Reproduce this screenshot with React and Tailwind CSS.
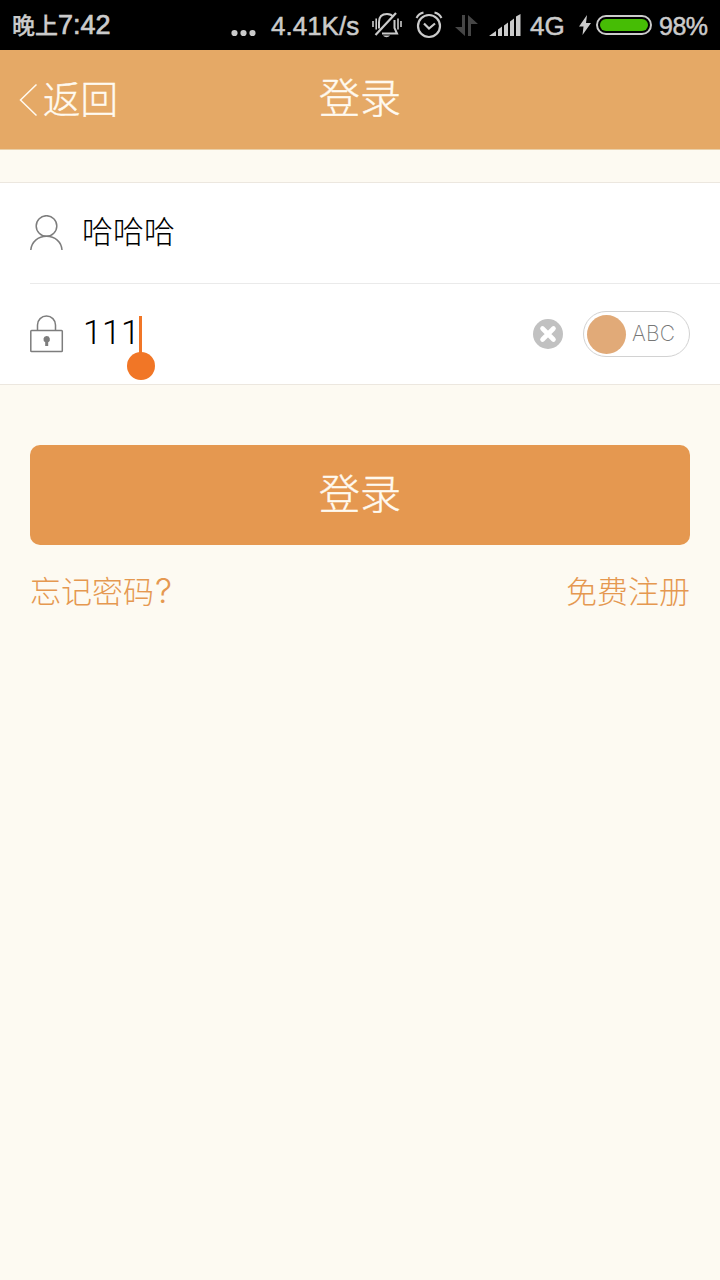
import React, { useState } from 'react';

const CJK = "font-['Noto_Sans_CJK_SC',sans-serif]";
const LATIN = "font-['Liberation_Sans','Noto_Sans_CJK_SC',sans-serif]";

function StatusBar() {
  return (
    <div className={`flex h-[50px] items-center bg-black text-[#cbcbcb] ${LATIN}`}>
      <div className="ml-3 flex w-[219px] items-center whitespace-nowrap">
        <span className="pt-px text-[23px] leading-[50px] font-medium [-webkit-text-stroke:0.3px]">晚上</span>
        <span className="text-[27px] leading-[50px] [-webkit-text-stroke:0.7px]">7:42</span>
      </div>
      <svg className="mt-4 h-2 w-[26px] shrink-0" viewBox="0 0 26 8" fill="currentColor">
        <circle cx="3.5" cy="4" r="3.1" />
        <circle cx="12.5" cy="4" r="3.1" />
        <circle cx="21.5" cy="4" r="3.1" />
      </svg>
      <span className="ml-[14px] w-[89px] shrink-0 pt-[2px] text-[26px] leading-[48px] whitespace-nowrap [-webkit-text-stroke:0.5px]">4.41K/s</span>

      {/* Muted bell */}
      <svg className="ml-3 h-[28px] w-[30px] shrink-0" viewBox="0 0 30 28" fill="none" stroke="currentColor" strokeWidth="2">
        <path d="M7 17.500V11c0-5 3-8 8-8 3 0 5 1 6.500 3M22.500 9v8l2.500 5.500H10" />
        <path d="M3.500 24L24 2" strokeWidth="2.200" />
        <path d="M11 24.500c2 2.200 5 2.200 7 0z" fill="currentColor" stroke="none" />
        <path d="M1 10v6M4.200 7.500v11M26 7.500v11M29 10v6" strokeWidth="1.600" />
      </svg>

      {/* Alarm */}
      <svg className="ml-[13px] h-[28px] w-[28px] shrink-0" viewBox="0 0 28 28" fill="none" stroke="currentColor" strokeWidth="2.200">
        <circle cx="14" cy="15" r="11" />
        <path d="M9 12.500l5 5 6-5" />
        <path d="M1.500 7C3 4 5.500 2.200 8.500 1.500M26.500 7C25 4 22.500 2.200 19.500 1.500" strokeWidth="2" />
      </svg>

      {/* Data arrows */}
      <svg className="mt-[2px] ml-3 h-[22px] w-[24px] shrink-0 text-[#464646]" viewBox="0 0 24 22" fill="currentColor">
        <path d="M7 0h3v21L0 12h7z" />
        <path d="M13 0l10 9h-7v12h-3z" />
      </svg>

      {/* Signal */}
      <svg className="ml-[10px] h-[22px] w-[32px] shrink-0" viewBox="0 0 32 22" fill="currentColor">
        <path d="M0 22l7-5v5zM9 15.500l4-3V22H9zM15 11.500l4-3V22h-4zM21 7.500l4-3V22h-4zM27 2.500l4.500-2.500V22H27z" />
      </svg>
      <span className="ml-[9px] w-[38px] shrink-0 pt-[2px] text-[26px] leading-[48px] [-webkit-text-stroke:0.5px]">4G</span>

      {/* Charging battery */}
      <svg className="ml-[11px] h-5 w-3 shrink-0" viewBox="0 0 12 20" fill="currentColor">
        <path d="M8 0L0 11.500h4.500L3.500 20 12 8H7z" />
      </svg>
      <div className="ml-[5px] flex h-[20px] w-[56px] shrink-0 items-center rounded-full border-2 border-[#cbcbcb] p-[2px]">
        <div className="h-3 w-full rounded-full bg-[#46bd05]" />
      </div>
      <span className="ml-[7px] pt-[2px] text-[25px] leading-[48px] tracking-[-0.5px] [-webkit-text-stroke:0.5px]">98%</span>
    </div>
  );
}

function Header() {
  return (
    <header className={`grid h-[100px] grid-cols-3 items-center border-b border-[#ead0a8] bg-[#e5a966] text-[#fffaf0] ${CJK}`}>
      <button className="flex items-center pl-[19px] text-left">
        <svg className="h-8 w-[18px]" viewBox="0 0 18 32" fill="none" stroke="currentColor" strokeWidth="1.500">
          <path d="M17.500 0.500L1.500 16l16 15.500" />
        </svg>
        <span className="mb-[7px] ml-[6px] text-[37.500px] leading-[91px] font-light [-webkit-text-stroke:0.4px]">返回</span>
      </button>
      <h1 className="pb-[10px] text-center text-[41px] leading-[88px] font-light [-webkit-text-stroke:0.4px]">登录</h1>
    </header>
  );
}

function LoginForm() {
  const [password, setPassword] = useState('111');

  return (
    <div className="mt-8 border-y border-[#ece7df] bg-white">
      <div className="flex h-[100px] items-center pl-[30px]">
        <svg className="h-9 w-[34px]" viewBox="0 0 34 36" fill="none" stroke="#7d7d7d" strokeWidth="1.500">
          <circle cx="16.500" cy="11" r="10.300" />
          <path d="M.8 35C1.500 27 8 21.300 16.500 21.300S31.500 27 32 35" />
        </svg>
        <span className={`mb-[6px] ml-[18px] text-[31px] leading-[46px] font-light text-black ${CJK}`}>哈哈哈</span>
      </div>
      <div className="ml-[30px] flex h-[101px] items-center border-t border-[#eaeaea] pr-[30px]">
        <svg className="h-[38px] w-[34px]" viewBox="0 0 34 38" fill="none" stroke="#7d7d7d" strokeWidth="1.500">
          <path d="M7.500 15.500V10c0-5 4-9 9-9s9 4 9 9v5.500" />
          <rect x=".8" y="15.500" width="31.500" height="21" rx=".8" />
          <path d="M16.500 21a3.300 3.300 0 0 1 1.700 6.200V31h-3v-3.800a3.300 3.300 0 0 1 1.300-6.200z" fill="#7d7d7d" stroke="none" />
        </svg>
        <div className="relative mb-[5px] ml-[19px] w-[58px] font-['Roboto',sans-serif] text-[34px] leading-[46px] font-light tracking-[0.1px] text-black">
          {password}
          {/* Text cursor with its drag handle */}
          <span className="absolute top-[7px] -right-px h-[38px] w-[3px] bg-[#f17626]" />
          <span className="absolute top-[43px] -right-[13.500px] size-7 rounded-full bg-[#f17626]" />
        </div>
        <button onClick={() => setPassword('')} className="mr-5 ml-auto">
          <svg className="size-[30px]" viewBox="0 0 30 30">
            <circle cx="15" cy="15" r="15" fill="#c1c1c1" />
            <path d="M9.500 9.500l11 11M20.500 9.500l-11 11" stroke="#fff" strokeWidth="4.600" strokeLinecap="round" />
          </svg>
        </button>
        <div className="flex h-[46px] w-[107px] items-center rounded-full border border-[#d2d2d2] pl-[3px]">
          <span className="size-[39px] rounded-full bg-[#e1aa78]" />
          <span className="ml-[6px] font-['Inter',sans-serif] text-[21px] font-extralight tracking-[0.2px] text-[#777]">ABC</span>
        </div>
      </div>
    </div>
  );
}

export default function App() {
  return (
    <div className="h-[1280px] w-[720px] overflow-hidden bg-[#fdfaf2]">
      <StatusBar />
      <Header />
      <LoginForm />
      <div className={`px-[30px] pt-[60px] font-light ${CJK}`}>
        <button className="flex h-[100px] w-full items-center justify-center rounded-[10px] bg-[#e59850] pb-[9px] text-[41px] leading-[60px] text-[#fffaf0] [-webkit-text-stroke:0.4px]">
          登录
        </button>
        <div className="mt-[22px] flex justify-between text-[31px] leading-[46px] text-[#e59850]">
          <a href="#forgot">忘记密码<span className="ml-px font-['Inter',sans-serif] text-[34px] leading-none">?</span></a>
          <a href="#register">免费注册</a>
        </div>
      </div>
    </div>
  );
}
